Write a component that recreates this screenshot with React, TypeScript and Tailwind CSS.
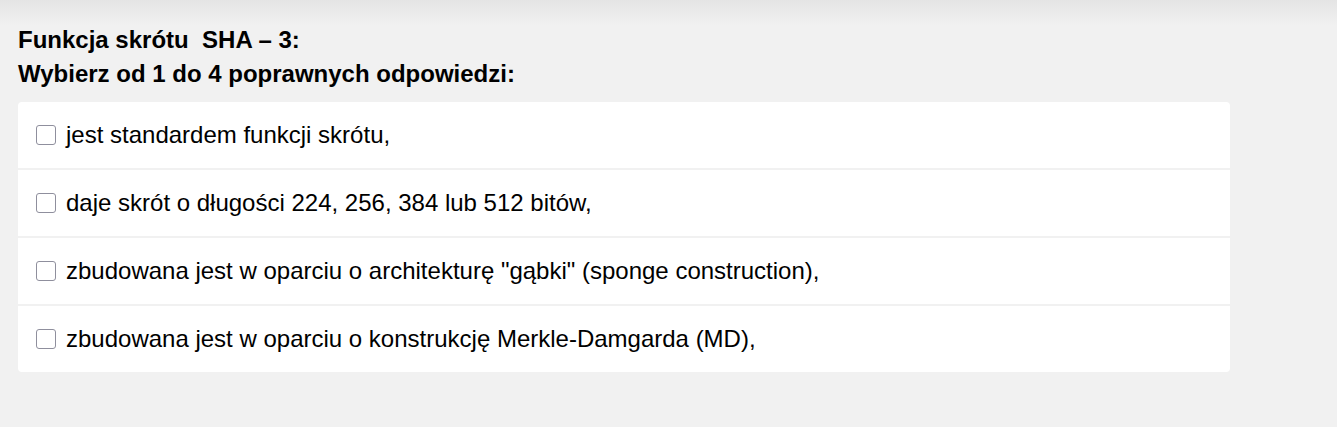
import { useState } from 'react';

const options = [
    'jest standardem funkcji skrótu,',
    'daje skrót o długości 224, 256, 384 lub 512 bitów,',
    'zbudowana jest w oparciu o architekturę "gąbki" (sponge construction),',
    'zbudowana jest w oparciu o konstrukcję Merkle-Damgarda (MD),',
];

export default function App() {
    const [checked, setChecked] = useState<boolean[]>(options.map(() => false));

    const toggle = (i: number) => {
        setChecked(prev => prev.map((v, idx) => (idx === i ? !v : v)));
    };

    return (
        <div
            className="min-h-[427px] bg-[#f1f1f1] bg-[linear-gradient(#e4e4e4,#f1f1f1_26px)] px-[18px] pt-[23px] text-black"
            style={{ fontFamily: '"Liberation Sans", Arial, sans-serif' }}
        >
            <div className="text-[24px] font-bold leading-[34px]">
                <p>Funkcja skrótu&nbsp; SHA – 3:</p>
                <p>Wybierz od 1 do 4 poprawnych odpowiedzi:</p>
            </div>

            <div className="mt-[11px] flex w-[1212px] flex-col gap-[2px]">
                {options.map((text, i) => (
                    <label
                        key={i}
                        className={
                            'flex h-[66px] cursor-pointer items-center bg-white px-[18px] ' +
                            (i === 0 ? 'rounded-t-[4px]' : '') +
                            (i === options.length - 1 ? 'rounded-b-[4px]' : '')
                        }
                    >
                        <input
                            type="checkbox"
                            checked={checked[i]}
                            onChange={() => toggle(i)}
                            className="m-0 h-5 w-5 shrink-0 cursor-pointer appearance-none rounded-[3px] border border-[#8f8f9d] bg-white checked:border-[#0075ff] checked:bg-[#0075ff]"
                        />
                        <span className="ml-[10px] text-[24px] leading-[28px]">{text}</span>
                    </label>
                ))}
            </div>
        </div>
    );
}
